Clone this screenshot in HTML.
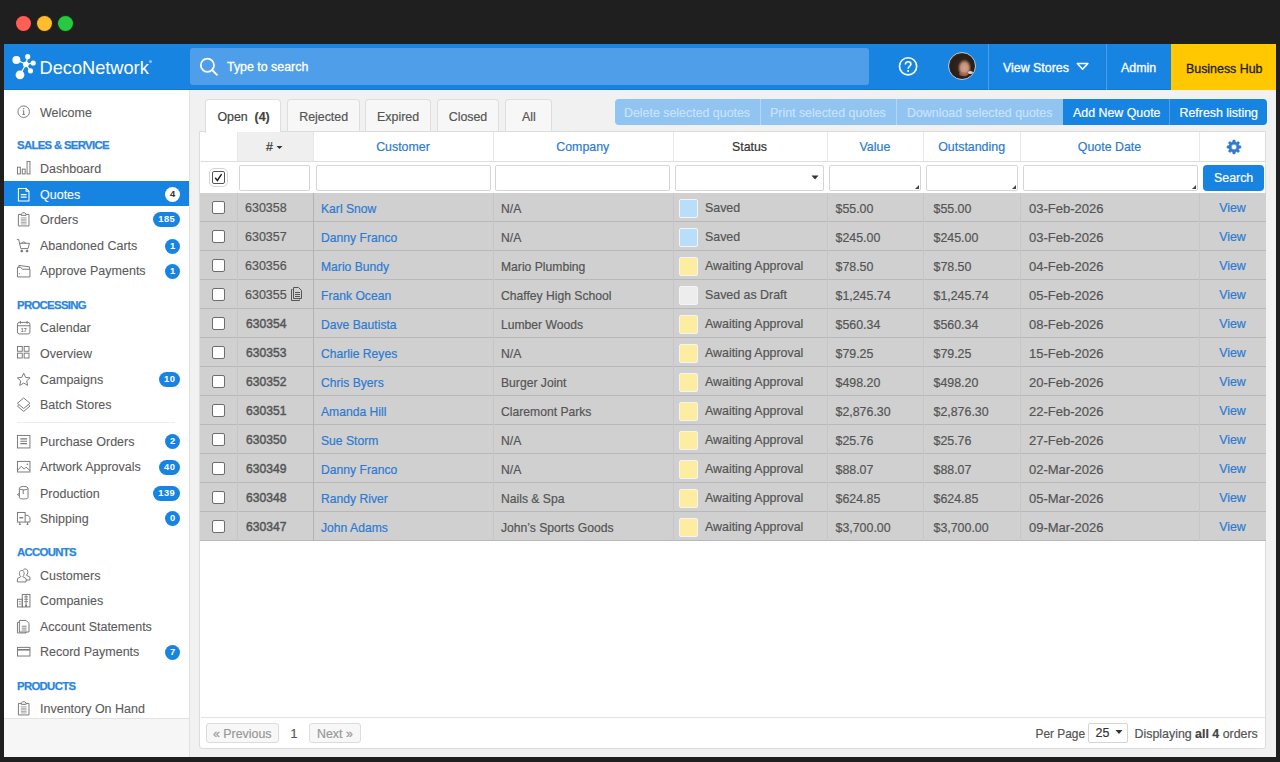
<!DOCTYPE html>
<html><head><meta charset="utf-8">
<style>
*{box-sizing:border-box;margin:0;padding:0}
html,body{width:1280px;height:762px;overflow:hidden;background:#1f1f1f;font-family:"Liberation Sans",sans-serif;position:relative}
.a{position:absolute}
.tl{position:absolute;top:16px;width:15px;height:15px;border-radius:50%;}
.ht{position:absolute;color:#fff;font-size:12.4px;white-space:nowrap;line-height:14px;-webkit-text-stroke:0.3px currentColor}
.si{position:absolute;left:40px;font-size:12.5px;color:#5f5f5f;white-space:nowrap;line-height:14px;-webkit-text-stroke:0.1px currentColor}
.sh{position:absolute;left:17px;font-size:11.4px;letter-spacing:-0.7px;font-weight:bold;color:#2a86dc;white-space:nowrap;line-height:14px;-webkit-text-stroke:0.25px currentColor}
.ic{position:absolute;left:15.8px;width:15.4px;height:15.4px}
.bd{position:absolute;height:15px;min-width:15px;border-radius:8px;background:#1784e1;color:#fff;font-size:9.3px;font-weight:bold;text-align:center;line-height:15.8px;padding:0;letter-spacing:0.4px;text-indent:0.4px}
.tx{position:absolute;white-space:nowrap;font-size:12.4px;line-height:14px;-webkit-text-stroke:0.2px currentColor}
</style></head>
<body>
<div class="tl" style="left:16px;background:#fe5f57;box-shadow:0 0 0 1px #3a1a18"></div>
<div class="tl" style="left:37px;background:#febc2e;box-shadow:0 0 0 1px #3a2a10"></div>
<div class="tl" style="left:58px;background:#28c840;box-shadow:0 0 0 1px #123a18"></div>
<div class="a" style="left:4px;top:44px;width:1272px;height:713px;background:#f1f1f1"></div>


<div class="a" style="left:4px;top:44px;width:1272px;height:46px;background:#1784e1;box-shadow:inset 0 -1px 0 #1777cf"></div>
<svg class="a" style="left:8px;top:50px" width="32" height="32" viewBox="8 50 32 32">
  <g stroke="#fff" stroke-width="1.2">
    <line x1="25.9" y1="64.3" x2="16.4" y2="59.9"/><line x1="25.9" y1="64.3" x2="27.7" y2="56.7"/>
    <line x1="25.9" y1="64.3" x2="33.2" y2="63"/><line x1="25.9" y1="64.3" x2="30.5" y2="70.8"/>
    <line x1="25.9" y1="64.3" x2="20" y2="74.8"/>
  </g>
  <g fill="#fff">
    <circle cx="25.9" cy="64.3" r="2.9"/><circle cx="16.4" cy="59.9" r="4.0"/><circle cx="27.7" cy="56.7" r="2.6"/>
    <circle cx="33.2" cy="63" r="2.6"/><circle cx="30.5" cy="70.8" r="2.6"/><circle cx="20" cy="74.8" r="4.4"/>
  </g>
</svg>
<div class="ht" style="left:39.6px;top:57.8px;font-size:18.2px;line-height:20px;-webkit-text-stroke:0">DecoNetwork</div>
<div class="a" style="left:149px;top:59.5px;width:3.2px;height:3.2px;border-radius:50%;background:#8cc4f6"></div>
<div class="a" style="left:190px;top:47.5px;width:679px;height:37.5px;border-radius:3px;background:#4f9ee9"></div>
<svg class="a" style="left:199px;top:57px" width="20" height="20" viewBox="0 0 20 20">
  <circle cx="8.4" cy="8.2" r="6.6" fill="none" stroke="#fff" stroke-width="1.7"/>
  <line x1="13.1" y1="13" x2="18.5" y2="18.4" stroke="#fff" stroke-width="1.9"/>
</svg>
<div class="ht" style="left:227px;top:60px">Type to search</div>
<svg class="a" style="left:897px;top:56px" width="22" height="22" viewBox="0 0 22 22">
  <circle cx="11.1" cy="10.3" r="8.6" fill="none" stroke="#fff" stroke-width="1.6"/>
  <path d="M8.4 8.6C8.4 6.6 9.7 5.8 11.1 5.8C12.7 5.8 13.9 6.9 13.9 8.3C13.9 10.2 11.1 10.4 11.1 12.8" fill="none" stroke="#fff" stroke-width="1.6"/><circle cx="11.1" cy="15" r="1" fill="#fff"/>
</svg>
<div class="a" style="left:948px;top:52px;width:28px;height:28px;border-radius:50%;border:1px solid #b9c7d2;overflow:hidden;background:radial-gradient(ellipse 7px 9px at 15.5px 15px,#d7a58c 0,#c08f76 55%,rgba(60,40,30,0) 100%),radial-gradient(circle at 14px 14px,#3b2b22 0,#2a1d17 60%,#6d5a4a 100%)">
  <div class="a" style="left:10px;top:19px;width:9px;height:4px;border-radius:50%;background:#b06a5e;opacity:.6"></div>
  <div class="a" style="left:19px;top:18px;width:5px;height:3px;border-radius:50%;background:#e9e3dc;opacity:.9"></div>
</div>
<div class="a" style="left:988px;top:44px;width:1px;height:46px;background:#4d9de6"></div>
<div class="ht" style="left:1003px;top:61px">View Stores</div>
<svg class="a" style="left:1076px;top:61px" width="13" height="10" viewBox="0 0 13 10"><path d="M1.3 2.5 H11.9 L6.6 8.2 Z" fill="none" stroke="#fff" stroke-width="1.5" stroke-linejoin="round"/></svg>
<div class="a" style="left:1106px;top:44px;width:1px;height:46px;background:#4d9de6"></div>
<div class="ht" style="left:1121px;top:61.4px">Admin</div>
<div class="a" style="left:1171px;top:44px;width:105px;height:46px;background:#ffc800"></div>
<div class="ht" style="left:1186px;top:61.5px;color:#222">Business Hub</div>

<div class="a" style="left:4px;top:90px;width:186px;height:667px;background:#fff;border-right:1px solid #e2e2e2"></div>
<div class="a" style="left:4px;top:718px;width:185px;height:39px;background:#f6f6f6;border-top:1px solid #e2e2e2"></div>
<div class="a" style="left:4px;top:181px;width:185px;height:25px;background:#1784e1"></div>
<div class="a" style="left:17px;top:422px;width:158px;height:1px;background:#ededed"></div>

<div class="si" style="top:105.6px;color:#5b5b5b">Welcome</div>
<svg class="ic" style="top:103.9px" viewBox="0 0 16 16"><circle cx="8" cy="8" r="6" fill="none" stroke="#777" stroke-width="1"/><path d="M8 7V11M6.8 11H9.2M7 7H8" stroke="#777" stroke-width="1.1" fill="none"/><circle cx="8" cy="5" r=".75" fill="#777"/></svg>
<div class="sh" style="top:138.2px">SALES &amp; SERVICE</div>
<div class="si" style="top:161.8px;color:#5b5b5b">Dashboard</div>
<svg class="ic" style="top:159.9px" viewBox="0 0 16 16"><g fill="none" stroke="#777" stroke-width="1"><rect x="1.5" y="7.5" width="3" height="7"/><rect x="6.5" y="9.5" width="3" height="5"/><rect x="11.5" y="1.5" width="3" height="13"/></g></svg>
<div class="si" style="top:188.0px;color:#fff">Quotes</div>
<svg class="ic" style="top:186.9px" viewBox="0 0 16 16"><g fill="none" stroke="#fff" stroke-width="1.1"><path d="M2.5 1.5H10.5L13.5 4.5V14.5H2.5Z"/><path d="M10.5 1.5V4.5H13.5"/><path d="M5 8H11M5 10.5H11" stroke-width="1.3"/></g></svg>
<div class="bd" style="left:165px;top:187.3px;width:15px;background:#fff;color:#333">4</div>
<div class="si" style="top:213.0px;color:#5b5b5b">Orders</div>
<svg class="ic" style="top:211.9px" viewBox="0 0 16 16"><g fill="none" stroke="#777" stroke-width="1"><path d="M5.5 2.5H2.5V14.5H13.5V2.5H10.5"/><path d="M5.5 3.5V2L7 0.8H9L10.5 2V3.5Z"/></g><path d="M5 6H11M5 7.6H11M5 9.2H11M5 10.8H11M5 12.4H11" stroke="#777" stroke-width=".8" opacity=".8"/></svg>
<div class="bd" style="left:153px;top:212.3px;width:27px">185</div>
<div class="si" style="top:239.2px;color:#5b5b5b">Abandoned Carts</div>
<svg class="ic" style="top:238.1px" viewBox="0 0 16 16"><g fill="none" stroke="#777" stroke-width="1"><path d="M1 1.5H2.8L5 11H12.5L14 5.5H3.8"/><path d="M6 5.5C6.5 3.5 9.5 3.5 10 5.5"/><circle cx="6" cy="13.5" r="1" fill="#777"/><circle cx="11.5" cy="13.5" r="1" fill="#777"/></g></svg>
<div class="bd" style="left:165px;top:238.5px;width:15px">1</div>
<div class="si" style="top:264.4px;color:#5b5b5b">Approve Payments</div>
<svg class="ic" style="top:263.3px" viewBox="0 0 16 16"><g fill="none" stroke="#777" stroke-width="1"><path d="M1.5 4.5V14.5H14.5V6.5H6.5L5 4.5H1.5Z"/><path d="M3 4.5V2.5L14 4V6.5"/></g><circle cx="3.5" cy="11" r=".6" fill="#777"/></svg>
<div class="bd" style="left:165px;top:263.7px;width:15px">1</div>
<div class="sh" style="top:297.8px">PROCESSING</div>
<div class="si" style="top:321.4px;color:#5b5b5b">Calendar</div>
<svg class="ic" style="top:320.3px" viewBox="0 0 16 16"><g fill="none" stroke="#777" stroke-width="1"><rect x="1.5" y="2.5" width="13" height="12" rx="2"/><path d="M1.5 6H14.5M4.5 1V4M11.5 1V4"/></g><text x="8" y="12.6" font-size="5.5" font-weight="bold" text-anchor="middle" fill="#777" font-family="Liberation Sans">17</text></svg>
<div class="si" style="top:346.6px;color:#5b5b5b">Overview</div>
<svg class="ic" style="top:344.7px" viewBox="0 0 16 16"><g fill="none" stroke="#777" stroke-width="1"><rect x="1.5" y="1.5" width="5" height="5"/><rect x="8.5" y="1.5" width="5" height="5"/><rect x="1.5" y="8.5" width="5" height="5"/><rect x="8.5" y="8.5" width="5" height="5"/></g></svg>
<div class="si" style="top:372.8px;color:#5b5b5b">Campaigns</div>
<svg class="ic" style="top:371.7px" viewBox="0 0 16 16"><path d="M8 1.2L10 5.6L14.6 6.1L11.1 9.2L12.1 13.9L8 11.5L3.9 13.9L4.9 9.2L1.4 6.1L6 5.6Z" fill="none" stroke="#777" stroke-width="1" stroke-linejoin="round"/></svg>
<div class="bd" style="left:159px;top:372.1px;width:21px">10</div>
<div class="si" style="top:397.7px;color:#5b5b5b">Batch Stores</div>
<svg class="ic" style="top:396.6px" viewBox="0 0 16 16"><g fill="none" stroke="#777" stroke-width="1" stroke-linejoin="round"><path d="M8 1L14.5 6.5L8 12L1.5 6.5Z"/><path d="M2.9 8.4L1.5 9.5L8 15L14.5 9.5L13.1 8.4"/></g></svg>
<div class="si" style="top:435.0px;color:#5b5b5b">Purchase Orders</div>
<svg class="ic" style="top:433.9px" viewBox="0 0 16 16"><g fill="none" stroke="#777" stroke-width="1"><rect x="1.5" y="1.5" width="13" height="13"/><path d="M4.5 5H11.5M4.5 7.5H11.5M4.5 10H11.5" stroke-width="1.2"/></g></svg>
<div class="bd" style="left:165px;top:434.3px;width:15px">2</div>
<div class="si" style="top:460.2px;color:#5b5b5b">Artwork Approvals</div>
<svg class="ic" style="top:459.1px" viewBox="0 0 16 16"><g fill="none" stroke="#777" stroke-width="1"><rect x="1.5" y="2.5" width="13" height="11"/><path d="M1.5 12L5.5 7.5L8.5 10.5L10.5 8.5L14.5 12"/></g><circle cx="11.8" cy="5.5" r=".8" fill="#777"/></svg>
<div class="bd" style="left:159px;top:459.5px;width:21px">40</div>
<div class="si" style="top:486.6px;color:#5b5b5b">Production</div>
<svg class="ic" style="top:484.8px" viewBox="0 0 16 16"><g fill="none" stroke="#777" stroke-width="1"><path d="M3.5 3.5V13C3.5 14.2 5.5 14.5 8 14.5C10.5 14.5 12.5 14.2 12.5 13V3.5"/><ellipse cx="8" cy="3.3" rx="4.5" ry="1.8"/><path d="M3.5 8.5L1.5 10L3.5 11M7.5 5.1V9.5"/></g></svg>
<div class="bd" style="left:153px;top:485.9px;width:27px">139</div>
<div class="si" style="top:511.7px;color:#5b5b5b">Shipping</div>
<svg class="ic" style="top:510.6px" viewBox="0 0 16 16"><g fill="none" stroke="#777" stroke-width="1"><rect x="1.5" y="1.5" width="8" height="10"/><path d="M9.5 4.5H12.5L14.5 7V11.5H9.5"/><path d="M3.5 7H7.5" stroke-width="1.4"/><path d="M4 11.5V14M12 11.5V14M3 14H5M11 14H13"/></g></svg>
<div class="bd" style="left:165px;top:511.0px;width:15px">0</div>
<div class="sh" style="top:545.1px">ACCOUNTS</div>
<div class="si" style="top:568.8px;color:#5b5b5b">Customers</div>
<svg class="ic" style="top:567.7px" viewBox="0 0 16 16"><g fill="none" stroke="#777" stroke-width="1"><path d="M6 2.5C4 2.5 3.5 4.5 3.5 6C3.5 7.5 4.5 8.5 5 9L1.5 11V14.5H10.5V11L7 9C7.5 8.5 8.5 7.5 8.5 6C8.5 4.5 8 2.5 6 2.5Z"/><path d="M7.5 2C8 1.3 8.8 1 9.8 1C11.8 1 12.3 3 12.3 4.5C12.3 6 11.3 7 10.8 7.5L14.5 9.5V12.5H10.5"/></g></svg>
<div class="si" style="top:594.0px;color:#5b5b5b">Companies</div>
<svg class="ic" style="top:592.9px" viewBox="0 0 16 16"><g fill="none" stroke="#777" stroke-width="1"><rect x="6.5" y="1.5" width="8" height="13"/><rect x="1.5" y="6.5" width="5" height="8"/><path d="M8.5 4H12.5M8.5 6.5H12.5M8.5 9H12.5M10.5 1.5V12M3 9H5M3 11.5H5" stroke-width=".9"/><rect x="9.5" y="12" width="2" height="2.5" fill="#777" stroke="none"/></g></svg>
<div class="si" style="top:620.1px;color:#5b5b5b">Account Statements</div>
<svg class="ic" style="top:619.0px" viewBox="0 0 16 16"><g fill="none" stroke="#777" stroke-width="1"><path d="M3.5 3.5H1.5V14.5H10.5V13.5"/><path d="M3.5 1.5H10.5L13.5 4.5V13.5H3.5Z"/><path d="M6 7.5H11M6 9.5H11M6 11.5H11" stroke-width=".9"/></g></svg>
<div class="si" style="top:645.3px;color:#5b5b5b">Record Payments</div>
<svg class="ic" style="top:644.2px" viewBox="0 0 16 16"><g fill="none" stroke="#777" stroke-width="1"><rect x="1.5" y="3.5" width="13" height="9"/><path d="M1.5 6H14.5" stroke-width="1.6"/></g></svg>
<div class="bd" style="left:165px;top:644.6px;width:15px">7</div>
<div class="sh" style="top:679.0px">PRODUCTS</div>
<div class="si" style="top:702.0px;color:#5b5b5b">Inventory On Hand</div>
<svg class="ic" style="top:700.9px" viewBox="0 0 16 16"><g fill="none" stroke="#777" stroke-width="1"><path d="M5.5 2.5H2.5V14.5H13.5V2.5H10.5"/><path d="M5.5 3.5V2L7 0.8H9L10.5 2V3.5Z"/></g><path d="M5 6H11M5 7.6H11M5 9.2H11M5 10.8H11M5 12.4H11" stroke="#777" stroke-width=".8" opacity=".8"/></svg>
<div class="a" style="left:205.0px;top:99px;width:76.0px;height:34px;background:#fff;border:1px solid #dedede;border-bottom:none;border-radius:4px 4px 0 0;z-index:2"></div>
<div class="tx" style="left:217.4px;top:109.7px;color:#444;z-index:3">Open&nbsp;&nbsp;<b>(4)</b></div>
<div class="a" style="left:287.0px;top:99px;width:73.0px;height:32px;background:#f7f7f7;border:1px solid #dedede;border-bottom:none;border-radius:4px 4px 0 0"></div>
<div class="tx" style="left:299.2px;top:109.7px;color:#555">Rejected</div>
<div class="a" style="left:365.0px;top:99px;width:66.0px;height:32px;background:#f7f7f7;border:1px solid #dedede;border-bottom:none;border-radius:4px 4px 0 0"></div>
<div class="tx" style="left:377.1px;top:109.7px;color:#555">Expired</div>
<div class="a" style="left:437.0px;top:99px;width:61.5px;height:32px;background:#f7f7f7;border:1px solid #dedede;border-bottom:none;border-radius:4px 4px 0 0"></div>
<div class="tx" style="left:448.7px;top:109.7px;color:#555">Closed</div>
<div class="a" style="left:504.5px;top:99px;width:47.5px;height:32px;background:#f7f7f7;border:1px solid #dedede;border-bottom:none;border-radius:4px 4px 0 0"></div>
<div class="tx" style="left:521.9px;top:109.7px;color:#555">All</div>
<div class="a" style="left:615px;top:99px;width:448px;height:26px;background:#91c4f1;border-radius:4px 0 0 4px"></div>
<div class="a" style="left:1063px;top:99px;width:204px;height:26px;background:#1784e1;border-radius:0 4px 4px 0"></div>
<div class="a" style="left:760px;top:99px;width:1px;height:26px;background:#b3d6f5"></div>
<div class="a" style="left:896px;top:99px;width:1px;height:26px;background:#b3d6f5"></div>
<div class="a" style="left:1169px;top:99px;width:1px;height:26px;background:#4c9fe9"></div>
<div class="tx" style="left:624px;top:105.6px;color:#c8e3fa">Delete selected quotes</div>
<div class="tx" style="left:770px;top:105.6px;color:#c8e3fa">Print selected quotes</div>
<div class="tx" style="left:907px;top:105.6px;color:#c8e3fa">Download selected quotes</div>
<div class="tx" style="left:1073px;top:105.6px;color:#fff">Add New Quote</div>
<div class="tx" style="left:1179.5px;top:105.6px;color:#fff">Refresh listing</div>
<div class="a" style="left:199px;top:131px;width:1067px;height:618px;background:#fff;border:1px solid #dcdcdc;border-radius:0 0 3px 3px;z-index:1"></div>
<div class="a" style="left:237px;top:132px;width:76px;height:29.5px;background:#efefef;z-index:2"></div>
<div class="a" style="left:237.0px;top:132px;width:1px;height:29.5px;background:#e8e8e8;z-index:2"></div>
<div class="a" style="left:313.0px;top:132px;width:1px;height:29.5px;background:#e8e8e8;z-index:2"></div>
<div class="a" style="left:493.0px;top:132px;width:1px;height:29.5px;background:#e8e8e8;z-index:2"></div>
<div class="a" style="left:672.5px;top:132px;width:1px;height:29.5px;background:#e8e8e8;z-index:2"></div>
<div class="a" style="left:826.5px;top:132px;width:1px;height:29.5px;background:#e8e8e8;z-index:2"></div>
<div class="a" style="left:923.3px;top:132px;width:1px;height:29.5px;background:#e8e8e8;z-index:2"></div>
<div class="a" style="left:1020.0px;top:132px;width:1px;height:29.5px;background:#e8e8e8;z-index:2"></div>
<div class="a" style="left:1199.0px;top:132px;width:1px;height:29.5px;background:#e8e8e8;z-index:2"></div>
<div class="a" style="left:201px;top:161px;width:1064px;height:1px;background:#dedede;z-index:2"></div>
<div class="tx" style="left:237.0px;width:76.0px;text-align:center;top:140.4px;color:#333;z-index:3">#<svg width="11" height="8" viewBox="0 0 11 8" style="margin-left:0px"><path d="M3.5 3H9.5L6.5 6Z" fill="#333"/></svg></div>
<div class="tx" style="left:313.0px;width:180.0px;text-align:center;top:140.4px;color:#2d7bd0;z-index:3">Customer</div>
<div class="tx" style="left:493.0px;width:179.5px;text-align:center;top:140.4px;color:#2d7bd0;z-index:3">Company</div>
<div class="tx" style="left:672.5px;width:154.0px;text-align:center;top:140.4px;color:#333;z-index:3">Status</div>
<div class="tx" style="left:826.5px;width:96.8px;text-align:center;top:140.4px;color:#2d7bd0;z-index:3">Value</div>
<div class="tx" style="left:923.3px;width:96.7px;text-align:center;top:140.4px;color:#2d7bd0;z-index:3">Outstanding</div>
<div class="tx" style="left:1020.0px;width:179.0px;text-align:center;top:140.4px;color:#2d7bd0;z-index:3">Quote Date</div>
<svg class="a" style="left:1225.6px;top:139px;z-index:3" width="16" height="16" viewBox="0 0 16 16"><path fill="#2d7bd0" fill-rule="evenodd" stroke="#2d7bd0" stroke-width="0.5" stroke-linejoin="round" d="M6.01 3.20 L6.54 3.01 L6.99 1.07 L9.01 1.07 L9.46 3.01 L9.99 3.20 L10.50 3.44 L12.18 2.39 L13.61 3.82 L12.56 5.50 L12.80 6.01 L12.99 6.54 L14.93 6.99 L14.93 9.01 L12.99 9.46 L12.80 9.99 L12.56 10.50 L13.61 12.18 L12.18 13.61 L10.50 12.56 L9.99 12.80 L9.46 12.99 L9.01 14.93 L6.99 14.93 L6.54 12.99 L6.01 12.80 L5.50 12.56 L3.82 13.61 L2.39 12.18 L3.44 10.50 L3.20 9.99 L3.01 9.46 L1.07 9.01 L1.07 6.99 L3.01 6.54 L3.20 6.01 L3.44 5.50 L2.39 3.82 L3.82 2.39 L5.50 3.44Z M8 5.30 A2.7 2.7 0 1 0 8 10.70 A2.7 2.7 0 1 0 8 5.30Z"/></svg>
<div class="a" style="left:209px;top:167.5px;width:19px;height:19px;border:1px solid #d6d6d6;border-radius:5px;background:#fff;z-index:2"></div>
<div class="a" style="left:212px;top:170.5px;width:13px;height:13px;border:1.5px solid #555;border-radius:2px;background:#fff;z-index:3"></div>
<svg class="a" style="left:212px;top:170.5px;z-index:4" width="13" height="13" viewBox="0 0 13 13"><path d="M3.2 6.8L5.4 9.4L9.6 3.2" fill="none" stroke="#222" stroke-width="1.5"/></svg>
<div class="a" style="left:239.3px;top:164.5px;width:71.2px;height:26px;border:1px solid #d5d5d5;border-radius:2px;background:#fff;z-index:2"></div>
<div class="a" style="left:316.0px;top:164.5px;width:174.5px;height:26px;border:1px solid #d5d5d5;border-radius:2px;background:#fff;z-index:2"></div>
<div class="a" style="left:495.3px;top:164.5px;width:174.7px;height:26px;border:1px solid #d5d5d5;border-radius:2px;background:#fff;z-index:2"></div>
<div class="a" style="left:674.5px;top:164.5px;width:149.5px;height:26px;border:1px solid #d5d5d5;border-radius:2px;background:#fff;z-index:2"></div>
<svg class="a" style="left:810.5px;top:175px;z-index:3" width="8" height="6" viewBox="0 0 8 6"><path d="M0.5 0.5H7.5L4 4.5Z" fill="#333"/></svg>
<div class="a" style="left:828.8px;top:164.5px;width:91.8px;height:26px;border:1px solid #d5d5d5;border-radius:2px;background:#fff;z-index:2"></div>
<svg class="a" style="left:914.6px;top:184.5px;z-index:3" width="4" height="4" viewBox="0 0 4 4"><path d="M4 0V4H0Z" fill="#444"/></svg>
<div class="a" style="left:926.0px;top:164.5px;width:92.0px;height:26px;border:1px solid #d5d5d5;border-radius:2px;background:#fff;z-index:2"></div>
<svg class="a" style="left:1012.0px;top:184.5px;z-index:3" width="4" height="4" viewBox="0 0 4 4"><path d="M4 0V4H0Z" fill="#444"/></svg>
<div class="a" style="left:1023.0px;top:164.5px;width:175.0px;height:26px;border:1px solid #d5d5d5;border-radius:2px;background:#fff;z-index:2"></div>
<svg class="a" style="left:1192.0px;top:184.5px;z-index:3" width="4" height="4" viewBox="0 0 4 4"><path d="M4 0V4H0Z" fill="#444"/></svg>
<div class="a" style="left:1202.5px;top:164.5px;width:61.5px;height:26px;background:#1784e1;border-radius:4px;z-index:2"></div>
<div class="tx" style="left:1214px;top:171.0px;color:#fff;z-index:3">Search</div>
<div class="a" style="left:200px;top:193px;width:1066px;height:29px;background:#d0d0d0;border-bottom:1px solid #b8b8b8;z-index:2"></div>
<div class="a" style="left:212.3px;top:201px;width:12.7px;height:12.7px;border:1.5px solid #6d6d6d;border-radius:2px;background:#fff;z-index:3"></div>
<div class="tx" style="left:245px;top:201.3px;color:#555;z-index:3;font-size:12.5px">630358</div>
<div class="tx" style="left:321px;top:202.3px;color:#2d7bd0;z-index:3;font-size:12.15px">Karl Snow</div>
<div class="tx" style="left:501px;top:202.3px;color:#555;z-index:3;font-size:12.15px">N/A</div>
<div class="a" style="left:679px;top:198.5px;width:19px;height:19px;border:1px solid #f4f4f4;border-radius:2px;background:#b8defa;z-index:3"></div>
<div class="tx" style="left:705px;top:201.0px;color:#555;z-index:3">Saved</div>
<div class="tx" style="left:835.5px;top:202.3px;color:#555;z-index:3">$55.00</div>
<div class="tx" style="left:933.5px;top:202.3px;color:#555;z-index:3">$55.00</div>
<div class="tx" style="left:1029px;top:202.3px;color:#555;z-index:3;font-size:13px">03-Feb-2026</div>
<div class="tx" style="left:1199px;width:67px;text-align:center;top:201.3px;color:#2d7bd0;z-index:3">View</div>
<div class="a" style="left:200px;top:222px;width:1066px;height:29px;background:#d0d0d0;border-bottom:1px solid #b8b8b8;z-index:2"></div>
<div class="a" style="left:212.3px;top:230px;width:12.7px;height:12.7px;border:1.5px solid #6d6d6d;border-radius:2px;background:#fff;z-index:3"></div>
<div class="tx" style="left:245px;top:230.3px;color:#555;z-index:3;font-size:12.5px">630357</div>
<div class="tx" style="left:321px;top:231.3px;color:#2d7bd0;z-index:3;font-size:12.15px">Danny Franco</div>
<div class="tx" style="left:501px;top:231.3px;color:#555;z-index:3;font-size:12.15px">N/A</div>
<div class="a" style="left:679px;top:227.5px;width:19px;height:19px;border:1px solid #f4f4f4;border-radius:2px;background:#b8defa;z-index:3"></div>
<div class="tx" style="left:705px;top:230.0px;color:#555;z-index:3">Saved</div>
<div class="tx" style="left:835.5px;top:231.3px;color:#555;z-index:3">$245.00</div>
<div class="tx" style="left:933.5px;top:231.3px;color:#555;z-index:3">$245.00</div>
<div class="tx" style="left:1029px;top:231.3px;color:#555;z-index:3;font-size:13px">03-Feb-2026</div>
<div class="tx" style="left:1199px;width:67px;text-align:center;top:230.3px;color:#2d7bd0;z-index:3">View</div>
<div class="a" style="left:200px;top:251px;width:1066px;height:29px;background:#d0d0d0;border-bottom:1px solid #b8b8b8;z-index:2"></div>
<div class="a" style="left:212.3px;top:259px;width:12.7px;height:12.7px;border:1.5px solid #6d6d6d;border-radius:2px;background:#fff;z-index:3"></div>
<div class="tx" style="left:245px;top:259.3px;color:#555;z-index:3;font-size:12.5px">630356</div>
<div class="tx" style="left:321px;top:260.3px;color:#2d7bd0;z-index:3;font-size:12.15px">Mario Bundy</div>
<div class="tx" style="left:501px;top:260.3px;color:#555;z-index:3;font-size:12.15px">Mario Plumbing</div>
<div class="a" style="left:679px;top:256.5px;width:19px;height:19px;border:1px solid #f4f4f4;border-radius:2px;background:#fdeda0;z-index:3"></div>
<div class="tx" style="left:705px;top:259.0px;color:#555;z-index:3">Awaiting Approval</div>
<div class="tx" style="left:835.5px;top:260.3px;color:#555;z-index:3">$78.50</div>
<div class="tx" style="left:933.5px;top:260.3px;color:#555;z-index:3">$78.50</div>
<div class="tx" style="left:1029px;top:260.3px;color:#555;z-index:3;font-size:13px">04-Feb-2026</div>
<div class="tx" style="left:1199px;width:67px;text-align:center;top:259.3px;color:#2d7bd0;z-index:3">View</div>
<div class="a" style="left:200px;top:280px;width:1066px;height:29px;background:#d0d0d0;border-bottom:1px solid #b8b8b8;z-index:2"></div>
<div class="a" style="left:212.3px;top:288px;width:12.7px;height:12.7px;border:1.5px solid #6d6d6d;border-radius:2px;background:#fff;z-index:3"></div>
<div class="tx" style="left:245px;top:288.3px;color:#555;z-index:3;font-size:12.5px">630355</div>
<svg class="a" style="left:289px;top:287px;z-index:3" width="14" height="14" viewBox="0 0 14 14"><g fill="none" stroke="#555" stroke-width="1"><path d="M3.5 2.5H2.5V13.5H10.5V12.5"/><path d="M4.5 0.5H9.5L12.5 3.5V11.5H4.5Z"/><path d="M6 5.5H11M6 7.5H11M6 9.5H11"/></g></svg>
<div class="tx" style="left:321px;top:289.3px;color:#2d7bd0;z-index:3;font-size:12.15px">Frank Ocean</div>
<div class="tx" style="left:501px;top:289.3px;color:#555;z-index:3;font-size:12.15px">Chaffey High School</div>
<div class="a" style="left:679px;top:285.5px;width:19px;height:19px;border:1px solid #f4f4f4;border-radius:2px;background:#ededed;z-index:3"></div>
<div class="tx" style="left:705px;top:288.0px;color:#555;z-index:3">Saved as Draft</div>
<div class="tx" style="left:835.5px;top:289.3px;color:#555;z-index:3">$1,245.74</div>
<div class="tx" style="left:933.5px;top:289.3px;color:#555;z-index:3">$1,245.74</div>
<div class="tx" style="left:1029px;top:289.3px;color:#555;z-index:3;font-size:13px">05-Feb-2026</div>
<div class="tx" style="left:1199px;width:67px;text-align:center;top:288.3px;color:#2d7bd0;z-index:3">View</div>
<div class="a" style="left:200px;top:309px;width:1066px;height:29px;background:#d0d0d0;border-bottom:1px solid #b8b8b8;z-index:2"></div>
<div class="a" style="left:212.3px;top:317px;width:12.7px;height:12.7px;border:1.5px solid #6d6d6d;border-radius:2px;background:#fff;z-index:3"></div>
<div class="tx" style="left:246px;top:316.8px;color:#555;z-index:3;font-size:12.1px;-webkit-text-stroke:0.45px #555">630354</div>
<div class="tx" style="left:321px;top:318.3px;color:#2d7bd0;z-index:3;font-size:12.15px">Dave Bautista</div>
<div class="tx" style="left:501px;top:318.3px;color:#555;z-index:3;font-size:12.15px">Lumber Woods</div>
<div class="a" style="left:679px;top:314.5px;width:19px;height:19px;border:1px solid #f4f4f4;border-radius:2px;background:#fdeda0;z-index:3"></div>
<div class="tx" style="left:705px;top:317.0px;color:#555;z-index:3">Awaiting Approval</div>
<div class="tx" style="left:835.5px;top:318.3px;color:#555;z-index:3">$560.34</div>
<div class="tx" style="left:933.5px;top:318.3px;color:#555;z-index:3">$560.34</div>
<div class="tx" style="left:1029px;top:318.3px;color:#555;z-index:3;font-size:13px">08-Feb-2026</div>
<div class="tx" style="left:1199px;width:67px;text-align:center;top:317.3px;color:#2d7bd0;z-index:3">View</div>
<div class="a" style="left:200px;top:338px;width:1066px;height:29px;background:#d0d0d0;border-bottom:1px solid #b8b8b8;z-index:2"></div>
<div class="a" style="left:212.3px;top:346px;width:12.7px;height:12.7px;border:1.5px solid #6d6d6d;border-radius:2px;background:#fff;z-index:3"></div>
<div class="tx" style="left:246px;top:345.8px;color:#555;z-index:3;font-size:12.1px;-webkit-text-stroke:0.45px #555">630353</div>
<div class="tx" style="left:321px;top:347.3px;color:#2d7bd0;z-index:3;font-size:12.15px">Charlie Reyes</div>
<div class="tx" style="left:501px;top:347.3px;color:#555;z-index:3;font-size:12.15px">N/A</div>
<div class="a" style="left:679px;top:343.5px;width:19px;height:19px;border:1px solid #f4f4f4;border-radius:2px;background:#fdeda0;z-index:3"></div>
<div class="tx" style="left:705px;top:346.0px;color:#555;z-index:3">Awaiting Approval</div>
<div class="tx" style="left:835.5px;top:347.3px;color:#555;z-index:3">$79.25</div>
<div class="tx" style="left:933.5px;top:347.3px;color:#555;z-index:3">$79.25</div>
<div class="tx" style="left:1029px;top:347.3px;color:#555;z-index:3;font-size:13px">15-Feb-2026</div>
<div class="tx" style="left:1199px;width:67px;text-align:center;top:346.3px;color:#2d7bd0;z-index:3">View</div>
<div class="a" style="left:200px;top:367px;width:1066px;height:29px;background:#d0d0d0;border-bottom:1px solid #b8b8b8;z-index:2"></div>
<div class="a" style="left:212.3px;top:375px;width:12.7px;height:12.7px;border:1.5px solid #6d6d6d;border-radius:2px;background:#fff;z-index:3"></div>
<div class="tx" style="left:246px;top:374.8px;color:#555;z-index:3;font-size:12.1px;-webkit-text-stroke:0.45px #555">630352</div>
<div class="tx" style="left:321px;top:376.3px;color:#2d7bd0;z-index:3;font-size:12.15px">Chris Byers</div>
<div class="tx" style="left:501px;top:376.3px;color:#555;z-index:3;font-size:12.15px">Burger Joint</div>
<div class="a" style="left:679px;top:372.5px;width:19px;height:19px;border:1px solid #f4f4f4;border-radius:2px;background:#fdeda0;z-index:3"></div>
<div class="tx" style="left:705px;top:375.0px;color:#555;z-index:3">Awaiting Approval</div>
<div class="tx" style="left:835.5px;top:376.3px;color:#555;z-index:3">$498.20</div>
<div class="tx" style="left:933.5px;top:376.3px;color:#555;z-index:3">$498.20</div>
<div class="tx" style="left:1029px;top:376.3px;color:#555;z-index:3;font-size:13px">20-Feb-2026</div>
<div class="tx" style="left:1199px;width:67px;text-align:center;top:375.3px;color:#2d7bd0;z-index:3">View</div>
<div class="a" style="left:200px;top:396px;width:1066px;height:29px;background:#d0d0d0;border-bottom:1px solid #b8b8b8;z-index:2"></div>
<div class="a" style="left:212.3px;top:404px;width:12.7px;height:12.7px;border:1.5px solid #6d6d6d;border-radius:2px;background:#fff;z-index:3"></div>
<div class="tx" style="left:246px;top:403.8px;color:#555;z-index:3;font-size:12.1px;-webkit-text-stroke:0.45px #555">630351</div>
<div class="tx" style="left:321px;top:405.3px;color:#2d7bd0;z-index:3;font-size:12.15px">Amanda Hill</div>
<div class="tx" style="left:501px;top:405.3px;color:#555;z-index:3;font-size:12.15px">Claremont Parks</div>
<div class="a" style="left:679px;top:401.5px;width:19px;height:19px;border:1px solid #f4f4f4;border-radius:2px;background:#fdeda0;z-index:3"></div>
<div class="tx" style="left:705px;top:404.0px;color:#555;z-index:3">Awaiting Approval</div>
<div class="tx" style="left:835.5px;top:405.3px;color:#555;z-index:3">$2,876.30</div>
<div class="tx" style="left:933.5px;top:405.3px;color:#555;z-index:3">$2,876.30</div>
<div class="tx" style="left:1029px;top:405.3px;color:#555;z-index:3;font-size:13px">22-Feb-2026</div>
<div class="tx" style="left:1199px;width:67px;text-align:center;top:404.3px;color:#2d7bd0;z-index:3">View</div>
<div class="a" style="left:200px;top:425px;width:1066px;height:29px;background:#d0d0d0;border-bottom:1px solid #b8b8b8;z-index:2"></div>
<div class="a" style="left:212.3px;top:433px;width:12.7px;height:12.7px;border:1.5px solid #6d6d6d;border-radius:2px;background:#fff;z-index:3"></div>
<div class="tx" style="left:246px;top:432.8px;color:#555;z-index:3;font-size:12.1px;-webkit-text-stroke:0.45px #555">630350</div>
<div class="tx" style="left:321px;top:434.3px;color:#2d7bd0;z-index:3;font-size:12.15px">Sue Storm</div>
<div class="tx" style="left:501px;top:434.3px;color:#555;z-index:3;font-size:12.15px">N/A</div>
<div class="a" style="left:679px;top:430.5px;width:19px;height:19px;border:1px solid #f4f4f4;border-radius:2px;background:#fdeda0;z-index:3"></div>
<div class="tx" style="left:705px;top:433.0px;color:#555;z-index:3">Awaiting Approval</div>
<div class="tx" style="left:835.5px;top:434.3px;color:#555;z-index:3">$25.76</div>
<div class="tx" style="left:933.5px;top:434.3px;color:#555;z-index:3">$25.76</div>
<div class="tx" style="left:1029px;top:434.3px;color:#555;z-index:3;font-size:13px">27-Feb-2026</div>
<div class="tx" style="left:1199px;width:67px;text-align:center;top:433.3px;color:#2d7bd0;z-index:3">View</div>
<div class="a" style="left:200px;top:454px;width:1066px;height:29px;background:#d0d0d0;border-bottom:1px solid #b8b8b8;z-index:2"></div>
<div class="a" style="left:212.3px;top:462px;width:12.7px;height:12.7px;border:1.5px solid #6d6d6d;border-radius:2px;background:#fff;z-index:3"></div>
<div class="tx" style="left:246px;top:461.8px;color:#555;z-index:3;font-size:12.1px;-webkit-text-stroke:0.45px #555">630349</div>
<div class="tx" style="left:321px;top:463.3px;color:#2d7bd0;z-index:3;font-size:12.15px">Danny Franco</div>
<div class="tx" style="left:501px;top:463.3px;color:#555;z-index:3;font-size:12.15px">N/A</div>
<div class="a" style="left:679px;top:459.5px;width:19px;height:19px;border:1px solid #f4f4f4;border-radius:2px;background:#fdeda0;z-index:3"></div>
<div class="tx" style="left:705px;top:462.0px;color:#555;z-index:3">Awaiting Approval</div>
<div class="tx" style="left:835.5px;top:463.3px;color:#555;z-index:3">$88.07</div>
<div class="tx" style="left:933.5px;top:463.3px;color:#555;z-index:3">$88.07</div>
<div class="tx" style="left:1029px;top:463.3px;color:#555;z-index:3;font-size:13px">02-Mar-2026</div>
<div class="tx" style="left:1199px;width:67px;text-align:center;top:462.3px;color:#2d7bd0;z-index:3">View</div>
<div class="a" style="left:200px;top:483px;width:1066px;height:29px;background:#d0d0d0;border-bottom:1px solid #b8b8b8;z-index:2"></div>
<div class="a" style="left:212.3px;top:491px;width:12.7px;height:12.7px;border:1.5px solid #6d6d6d;border-radius:2px;background:#fff;z-index:3"></div>
<div class="tx" style="left:246px;top:490.8px;color:#555;z-index:3;font-size:12.1px;-webkit-text-stroke:0.45px #555">630348</div>
<div class="tx" style="left:321px;top:492.3px;color:#2d7bd0;z-index:3;font-size:12.15px">Randy River</div>
<div class="tx" style="left:501px;top:492.3px;color:#555;z-index:3;font-size:12.15px">Nails &amp; Spa</div>
<div class="a" style="left:679px;top:488.5px;width:19px;height:19px;border:1px solid #f4f4f4;border-radius:2px;background:#fdeda0;z-index:3"></div>
<div class="tx" style="left:705px;top:491.0px;color:#555;z-index:3">Awaiting Approval</div>
<div class="tx" style="left:835.5px;top:492.3px;color:#555;z-index:3">$624.85</div>
<div class="tx" style="left:933.5px;top:492.3px;color:#555;z-index:3">$624.85</div>
<div class="tx" style="left:1029px;top:492.3px;color:#555;z-index:3;font-size:13px">05-Mar-2026</div>
<div class="tx" style="left:1199px;width:67px;text-align:center;top:491.3px;color:#2d7bd0;z-index:3">View</div>
<div class="a" style="left:200px;top:512px;width:1066px;height:29px;background:#d0d0d0;border-bottom:1px solid #b8b8b8;z-index:2"></div>
<div class="a" style="left:212.3px;top:520px;width:12.7px;height:12.7px;border:1.5px solid #6d6d6d;border-radius:2px;background:#fff;z-index:3"></div>
<div class="tx" style="left:246px;top:519.8px;color:#555;z-index:3;font-size:12.1px;-webkit-text-stroke:0.45px #555">630347</div>
<div class="tx" style="left:321px;top:521.3px;color:#2d7bd0;z-index:3;font-size:12.15px">John Adams</div>
<div class="tx" style="left:501px;top:521.3px;color:#555;z-index:3;font-size:12.15px">John&#8217;s Sports Goods</div>
<div class="a" style="left:679px;top:517.5px;width:19px;height:19px;border:1px solid #f4f4f4;border-radius:2px;background:#fdeda0;z-index:3"></div>
<div class="tx" style="left:705px;top:520.0px;color:#555;z-index:3">Awaiting Approval</div>
<div class="tx" style="left:835.5px;top:521.3px;color:#555;z-index:3">$3,700.00</div>
<div class="tx" style="left:933.5px;top:521.3px;color:#555;z-index:3">$3,700.00</div>
<div class="tx" style="left:1029px;top:521.3px;color:#555;z-index:3;font-size:13px">09-Mar-2026</div>
<div class="tx" style="left:1199px;width:67px;text-align:center;top:520.3px;color:#2d7bd0;z-index:3">View</div>
<div class="a" style="left:237.0px;top:193px;width:1px;height:348px;background:#c6c6c6;z-index:3"></div>
<div class="a" style="left:313.0px;top:193px;width:1px;height:348px;background:#b3b3b3;z-index:3"></div>
<div class="a" style="left:493.0px;top:193px;width:1px;height:348px;background:#c6c6c6;z-index:3"></div>
<div class="a" style="left:672.5px;top:193px;width:1px;height:348px;background:#c6c6c6;z-index:3"></div>
<div class="a" style="left:826.5px;top:193px;width:1px;height:348px;background:#c6c6c6;z-index:3"></div>
<div class="a" style="left:923.3px;top:193px;width:1px;height:348px;background:#c6c6c6;z-index:3"></div>
<div class="a" style="left:1020.0px;top:193px;width:1px;height:348px;background:#c6c6c6;z-index:3"></div>
<div class="a" style="left:1199.0px;top:193px;width:1px;height:348px;background:#c6c6c6;z-index:3"></div>
<div class="a" style="left:201px;top:717px;width:1064px;height:1px;background:#e3e3e3;z-index:2"></div>
<div class="a" style="left:205.5px;top:722.5px;width:73px;height:20px;border:1px solid #dcdcdc;border-radius:3px;background:#f7f7f7;z-index:2"></div>
<div class="tx" style="left:213px;top:726.6px;color:#999;z-index:3">&#171; Previous</div>
<div class="tx" style="left:290.5px;top:726.6px;color:#555;z-index:3">1</div>
<div class="a" style="left:308.5px;top:722.5px;width:52px;height:20px;border:1px solid #dcdcdc;border-radius:3px;background:#f7f7f7;z-index:2"></div>
<div class="tx" style="left:317px;top:726.6px;color:#999;z-index:3">Next &#187;</div>
<div class="tx" style="left:1035.5px;top:726.7px;color:#555;z-index:3;font-size:11.9px">Per Page</div>
<div class="a" style="left:1087.5px;top:722.5px;width:40.5px;height:20px;border:1px solid #d5d5d5;border-radius:2px;background:#fff;z-index:2"></div>
<div class="tx" style="left:1095.5px;top:726.4px;color:#333;z-index:3">25</div>
<svg class="a" style="left:1114.5px;top:730px;z-index:3" width="8" height="5" viewBox="0 0 8 5"><path d="M0.5 0H7.5L4 4Z" fill="#333"/></svg>
<div class="tx" style="left:1134.5px;top:726.9px;color:#555;z-index:3">Displaying <b style="color:#444">all 4</b> orders</div>
</body></html>
